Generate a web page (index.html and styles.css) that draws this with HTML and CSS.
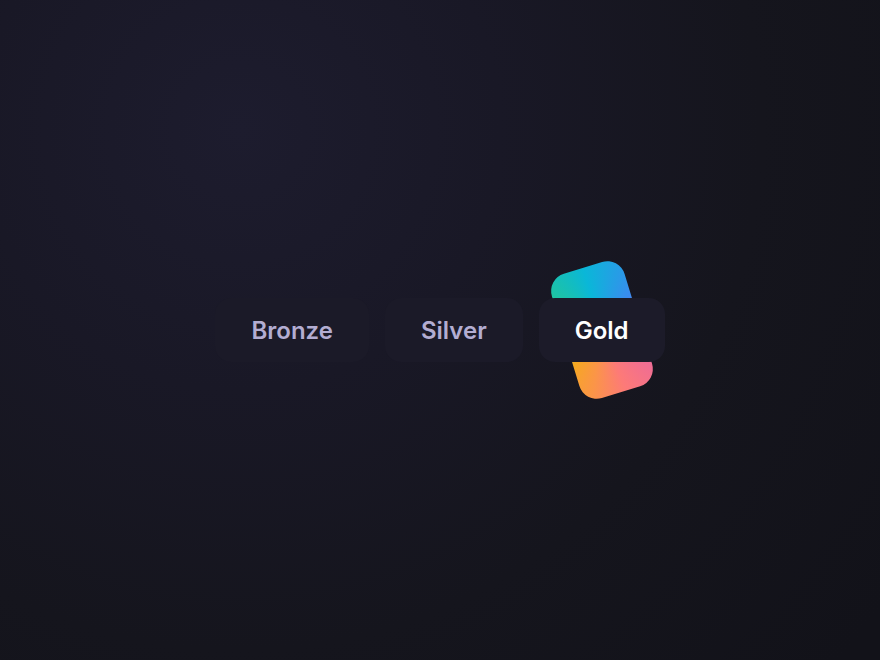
FILE: index.html
```html
<!DOCTYPE html>
<html lang="en">
<head>
<meta charset="utf-8">
<title>Tiers</title>
<link rel="stylesheet" href="styles.css">
</head>
<body>
<main class="stage">
  <nav class="tabs">
    <button class="tab">Bronze</button>
    <button class="tab">Silver</button>
    <button class="tab tab--active"><span class="glow"></span><span class="tab__label">Gold</span></button>
  </nav>
</main>
</body>
</html>
```
FILE: styles.css
```css
html, body {
  margin: 0;
  height: 100%;
}
body {
  background: radial-gradient(circle at 240px 130px, #1d1c2e 0%, #191826 260px, #15151d 520px, #121219 800px);
  font-family: Inter, "Noto Sans", sans-serif;
}
.stage {
  height: 100%;
  display: flex;
  align-items: center;
  justify-content: center;
}
.tabs {
  display: flex;
  gap: 16px;
}
.tab {
  position: relative;
  height: 64px;
  padding: 0 36px;
  border: 0;
  border-radius: 16px;
  background: #1b1a28;
  color: #b3add2;
  font-family: inherit;
  font-size: 24px;
  font-weight: 600;
  cursor: pointer;
}
.tab--active {
  z-index: 0;
  isolation: isolate;
  background: transparent;
  color: #ffffff;
}
.tab--active::before {
  content: "";
  position: absolute;
  inset: 0;
  border-radius: 16px;
  background: #1c1b29;
  z-index: -1;
}
.tab__label {
  position: relative;
}
.glow {
  position: absolute;
  left: 50%;
  top: 50%;
  width: 76px;
  height: 130px;
  margin: -65px 0 0 -38px;
  border-radius: 18px;
  transform: rotate(-17deg);
  background: conic-gradient(from 0deg, #0ab7d8 0deg, #3a8bef 55deg, #b66fc2 100deg, #ec6a9a 135deg, #fd7a78 175deg, #fb9548 205deg, #f6a821 235deg, #22c69a 315deg, #12bcc2 345deg, #0ab7d8 360deg);
  z-index: -2;
}
```
